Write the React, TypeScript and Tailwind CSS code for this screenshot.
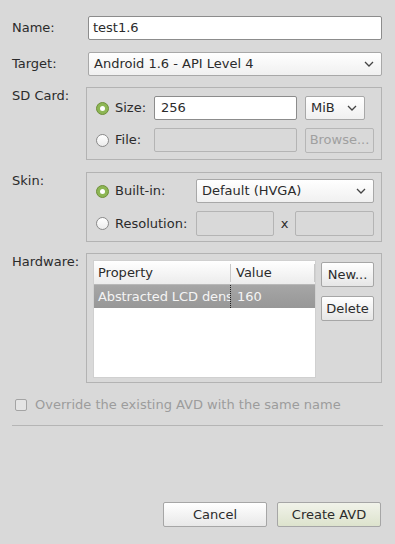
import React from "react";

const Chevron = () => (
  <svg width="10" height="6" viewBox="0 0 10 6" className="shrink-0">
    <path d="M1 1 L5 5 L9 1" fill="none" stroke="#444" strokeWidth="1.3" />
  </svg>
);

const Radio = ({ checked }: { checked?: boolean }) =>
  checked ? (
    <div className="w-[13px] h-[13px] rounded-full border border-[#6f8f3a] bg-[#8db654] flex items-center justify-center shrink-0">
      <div className="w-[5px] h-[5px] rounded-full bg-white" />
    </div>
  ) : (
    <div className="w-[13px] h-[13px] rounded-full border border-[#8a8a8a] bg-gradient-to-b from-[#ffffff] to-[#ececec] shrink-0" />
  );

const Input = ({ value, disabled, className }: { value?: string; disabled?: boolean; className: string }) => (
  <div
    className={
      "h-[24px] rounded-[2px] border flex items-center px-[6px] " +
      (disabled ? "border-[#b4b4b4] bg-[#d9d9d9] " : "border-[#8c8c8c] bg-white ") +
      className
    }
  >
    {value}
  </div>
);

const Select = ({ value, className }: { value: string; className: string }) => (
  <div
    className={
      "h-[24px] rounded-[2px] border border-[#a8a8a8] bg-gradient-to-b from-[#ffffff] to-[#f0f0f0] flex items-center justify-between pl-[5px] pr-[7px] " +
      className
    }
  >
    <span>{value}</span>
    <Chevron />
  </div>
);

const Button = ({ label, disabled, className }: { label: string; disabled?: boolean; className: string }) => (
  <div
    className={
      "h-[25px] rounded-[2px] border flex items-center justify-center " +
      (disabled
        ? "border-[#b6b6b6] bg-[#d9d9d9] text-[#a0a0a0] "
        : "border-[#a6a6a6] bg-gradient-to-b from-[#ffffff] to-[#e6e6e6] ") +
      className
    }
  >
    {label}
  </div>
);

export default function App() {
  return (
    <div
      className="w-[395px] h-[544px] bg-[#d9d9d9] text-[#2b2b2b] text-[13px] leading-[16px] flex flex-col pl-[12px] pr-[13px]"
      style={{ fontFamily: '"DejaVu Sans", sans-serif' }}
    >
      {/* Name */}
      <div className="flex items-center mt-[16px] h-[24px]">
        <div className="w-[76px]">Name:</div>
        <Input value="test1.6" className="flex-1 pl-[4px]" />
      </div>
      {/* Target */}
      <div className="flex items-center mt-[12px] h-[24px]">
        <div className="w-[76px]">Target:</div>
        <Select value="Android 1.6 - API Level 4" className="flex-1" />
      </div>

      {/* SD Card */}
      <div className="flex mt-[11px]">
        <div className="w-[74px] pt-[1px]">SD Card:</div>
        <div className="flex-1 h-[73px] border border-[#b3b3b3] pl-[9px] pt-[8px] flex flex-col gap-[8px]">
          <div className="flex items-center h-[24px]">
            <Radio checked />
            <div className="w-[45px] pl-[6px]">Size:</div>
            <Input value="256" className="w-[143px]" />
            <Select value="MiB" className="w-[60px] ml-[8px]" />
          </div>
          <div className="flex items-center h-[24px]">
            <Radio />
            <div className="w-[45px] pl-[6px]">File:</div>
            <Input disabled className="w-[143px]" />
            <Button label="Browse..." disabled className="w-[69px] ml-[8px]" />
          </div>
        </div>
      </div>

      {/* Skin */}
      <div className="flex mt-[12px]">
        <div className="w-[74px] pt-[1px]">Skin:</div>
        <div className="flex-1 h-[70px] border border-[#b3b3b3] pl-[9px] pt-[6px] flex flex-col gap-[8px]">
          <div className="flex items-center h-[24px]">
            <Radio checked />
            <div className="w-[87px] pl-[6px]">Built-in:</div>
            <Select value="Default (HVGA)" className="w-[178px]" />
          </div>
          <div className="flex items-center h-[25px]">
            <Radio />
            <div className="w-[87px] pl-[6px]">Resolution:</div>
            <Input disabled className="w-[78px] h-[25px]" />
            <div className="w-[21px] text-center">x</div>
            <Input disabled className="w-[79px] h-[25px]" />
          </div>
        </div>
      </div>

      {/* Hardware */}
      <div className="flex mt-[11px]">
        <div className="w-[74px] pt-[1px]">Hardware:</div>
        <div className="flex-1 h-[130px] border border-[#b3b3b3] pl-[6px] pt-[6px] flex">
          <div className="w-[223px] h-[118px] bg-white border border-[#d0d0d0] flex flex-col">
            <div className="h-[24px] bg-gradient-to-b from-[#ffffff] to-[#ececec] border-b border-[#b8b8b8] flex items-center">
              <div className="w-[137px] pl-[4px] border-r border-[#c8c8c8] h-[18px] flex items-center">Property</div>
              <div className="flex-1 pl-[5px] border-r border-[#c8c8c8] h-[18px] flex items-center">Value</div>
            </div>
            <div className="h-[23px] bg-gradient-to-b from-[#a6a6a6] to-[#979797] text-[#f4f4f4] flex items-center">
              <div className="w-[137px] pl-[4px] overflow-hidden whitespace-nowrap border-r border-dotted border-[#222] h-full flex items-center tracking-[-0.1px]">
                Abstracted LCD density
              </div>
              <div className="flex-1 pl-[6px]">160</div>
            </div>
          </div>
          <div className="flex flex-col ml-[5px] pt-[2px] gap-[9px]">
            <Button label="New..." className="w-[53px]" />
            <Button label="Delete" className="w-[53px]" />
          </div>
        </div>
      </div>

      {/* Override */}
      <div className="flex items-center mt-[14px] ml-[3px] h-[16px]">
        <div className="w-[12px] h-[12px] rounded-[2px] border border-[#a4a4a4] bg-[#e4e4e4]" />
        <div className="ml-[8px] text-[#9c9c9c]">Override the existing AVD with the same name</div>
      </div>

      <div className="mt-[12px] h-[1px] bg-[#b5b5b5] w-[371px]" />

      {/* Bottom buttons */}
      <div className="mt-[76px] flex justify-end gap-[10px] mr-[1px]">
        <div className="w-[104px] h-[25px] rounded-[2px] border border-[#a6a6a6] bg-gradient-to-b from-[#ffffff] to-[#e8e8e8] flex items-center justify-center">
          Cancel
        </div>
        <div className="w-[104px] h-[25px] rounded-[2px] border border-[#a6a6a6] bg-gradient-to-b from-[#f1f3ea] to-[#dde3cd] flex items-center justify-center">
          Create AVD
        </div>
      </div>
    </div>
  );
}
